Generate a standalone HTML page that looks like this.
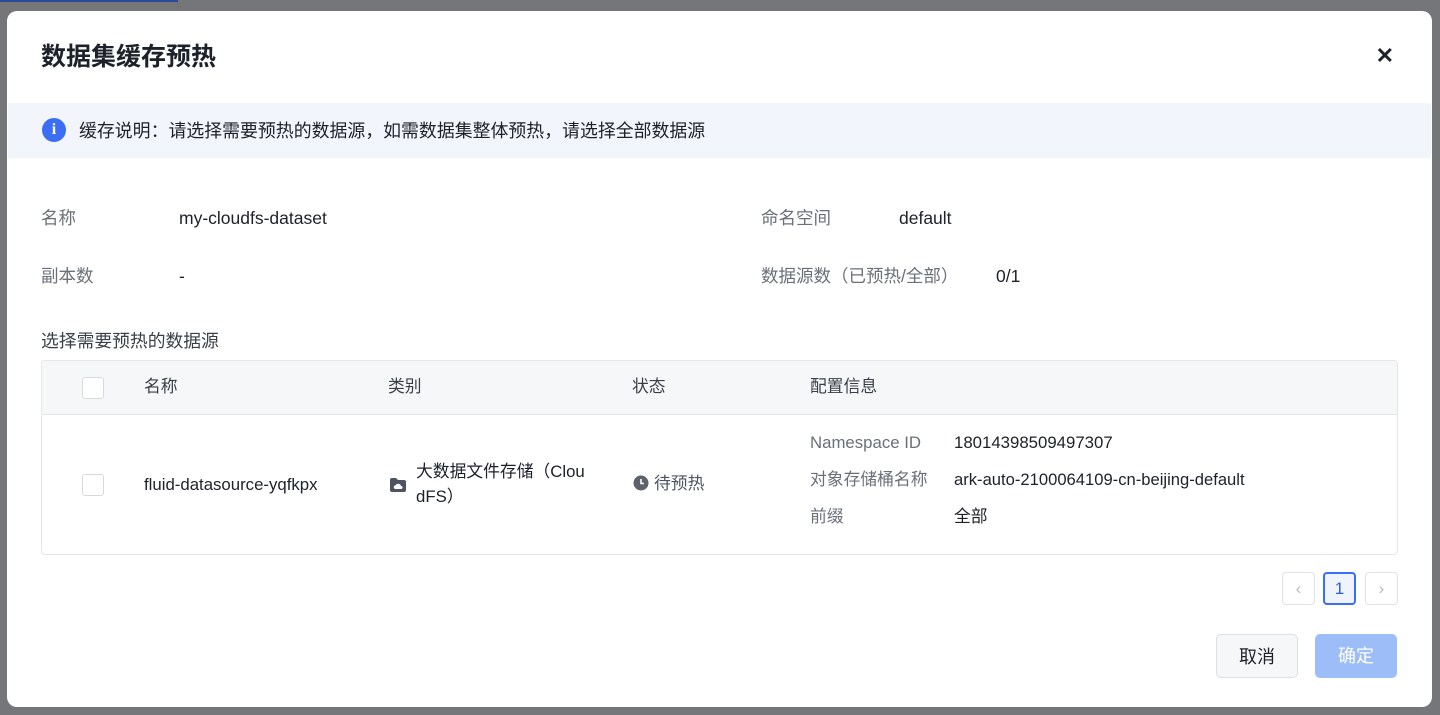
<!DOCTYPE html>
<html><head><meta charset="utf-8"><style>
*{margin:0;padding:0;box-sizing:border-box}
body{width:1440px;height:715px;background:#75767a;font-family:"Liberation Sans","Noto Sans CJK SC",sans-serif;position:relative;overflow:hidden;color:#1d2129}
.bar{position:absolute;left:0;top:0;width:178px;height:2px;background:#2a4a9a}
.modal{position:absolute;left:7px;top:11px;width:1425px;height:696px;background:#fff;border-radius:10px}
.a{position:absolute;white-space:nowrap;line-height:24px}
.t{font-size:25px;font-weight:bold;left:34px;top:31px;line-height:30px;color:#1d2129}
.close{right:38px;top:33px;font-size:22px;font-weight:bold}
.info{position:absolute;left:1px;top:92px;width:1423px;height:55px;background:#f2f5fc}
.lbl{color:#6b7078;font-size:17.5px}
.v{font-size:17.5px;color:#1d2129}
.s{font-size:16.8px}
.tbl{position:absolute;left:34px;top:349px;width:1357px;height:195px;border:1px solid #e4e6eb;border-radius:4px;overflow:hidden}
.th{position:absolute;left:0;top:0;width:100%;height:54px;background:#f6f7f9;border-bottom:1px solid #e4e6eb}
.cb{position:absolute;width:22px;height:22px;border:1px solid #d6d9de;border-radius:3px;background:#fff}
.pg{position:absolute;width:33px;height:33px;border:1px solid #dfe2e7;border-radius:4px;color:#b8bcc3;text-align:center;line-height:31px;font-size:17px}
.btn{position:absolute;height:44px;border-radius:5px;font-size:18px;text-align:center;line-height:44px}
</style></head><body>
<div class="bar"></div>
<div class="modal">
<div class="a t">数据集缓存预热</div>
<div class="a close">✕</div>
<div class="info">
<div class="a" style="left:34px;top:15px;width:24px;height:24px;border-radius:50%;background:#3b6ef5;color:#fff;font-weight:bold;font-size:16px;text-align:center;line-height:24px;font-family:'Liberation Serif',serif">i</div>
<div class="a v" style="left:71px;top:16px;font-size:17.9px">缓存说明：请选择需要预热的数据源，如需数据集整体预热，请选择全部数据源</div>
</div>
<div class="a lbl" style="left:34px;top:195px">名称</div>
<div class="a v" style="left:172px;top:195px">my-cloudfs-dataset</div>
<div class="a lbl" style="left:754px;top:195px">命名空间</div>
<div class="a v" style="left:892px;top:195px">default</div>
<div class="a lbl" style="left:34px;top:253px">副本数</div>
<div class="a v" style="left:172px;top:253px">-</div>
<div class="a lbl" style="left:754px;top:253px">数据源数（已预热/全部）</div>
<div class="a v" style="left:989px;top:253px">0/1</div>
<div class="a v" style="left:34px;top:318px;color:#3a3f47;font-size:17.8px">选择需要预热的数据源</div>
<div class="tbl">
<div class="th"></div>
<div class="cb" style="left:40px;top:16px"></div>
<div class="a s" style="left:102px;top:14px;color:#3a3f47">名称</div>
<div class="a s" style="left:346px;top:14px;color:#3a3f47">类别</div>
<div class="a s" style="left:590px;top:14px;color:#3a3f47">状态</div>
<div class="a s" style="left:768px;top:14px;color:#3a3f47">配置信息</div>
<div class="cb" style="left:40px;top:113px"></div>
<div class="a s" style="left:102px;top:112px">fluid-datasource-yqfkpx</div>
<svg class="a" style="left:347px;top:116px" width="18" height="16" viewBox="0 0 18 16"><path d="M1 3a2 2 0 0 1 2-2h4l2 2h6a2 2 0 0 1 2 2v8a2 2 0 0 1-2 2H3a2 2 0 0 1-2-2z" fill="#4e5361"/><path d="M6 12a2 2 0 0 1 0.5-3.8 3 3 0 0 1 5.5 0.8 1.5 1.5 0 0 1 0 3z" fill="#fff"/></svg>
<div class="a s" style="left:374px;top:98px;line-height:25px;white-space:normal;width:175px">大数据文件存储（Clou<br>dFS）</div>
<svg class="a" style="left:591px;top:114px" width="16" height="16" viewBox="0 0 16 16"><circle cx="8" cy="8" r="7.5" fill="#5d626b"/><path d="M8 4v4.5h3" stroke="#fff" stroke-width="1.6" fill="none"/></svg>
<div class="a s" style="left:612px;top:111px;color:#4e5361">待预热</div>
<div class="a lbl s" style="left:768px;top:70px">Namespace ID</div>
<div class="a s" style="left:912px;top:70px">18014398509497307</div>
<div class="a lbl s" style="left:768px;top:107px">对象存储桶名称</div>
<div class="a s" style="left:912px;top:107px;font-size:16.6px">ark-auto-2100064109-cn-beijing-default</div>
<div class="a lbl s" style="left:768px;top:144px">前缀</div>
<div class="a s" style="left:912px;top:144px">全部</div>
</div>
<div class="pg" style="left:1275px;top:561px">‹</div>
<div class="pg" style="left:1316px;top:561px;border:2px solid #3b6ef5;background:#eef3fe;color:#2f5fd8;line-height:29px">1</div>
<div class="pg" style="left:1358px;top:561px">›</div>
<div class="btn" style="left:1209px;top:623px;width:82px;background:#f6f7f9;border:1px solid #dcdfe4;color:#1d2129">取消</div>
<div class="btn" style="left:1308px;top:623px;width:82px;background:#9dbdf9;color:#fff">确定</div>
</div>
</body></html>
